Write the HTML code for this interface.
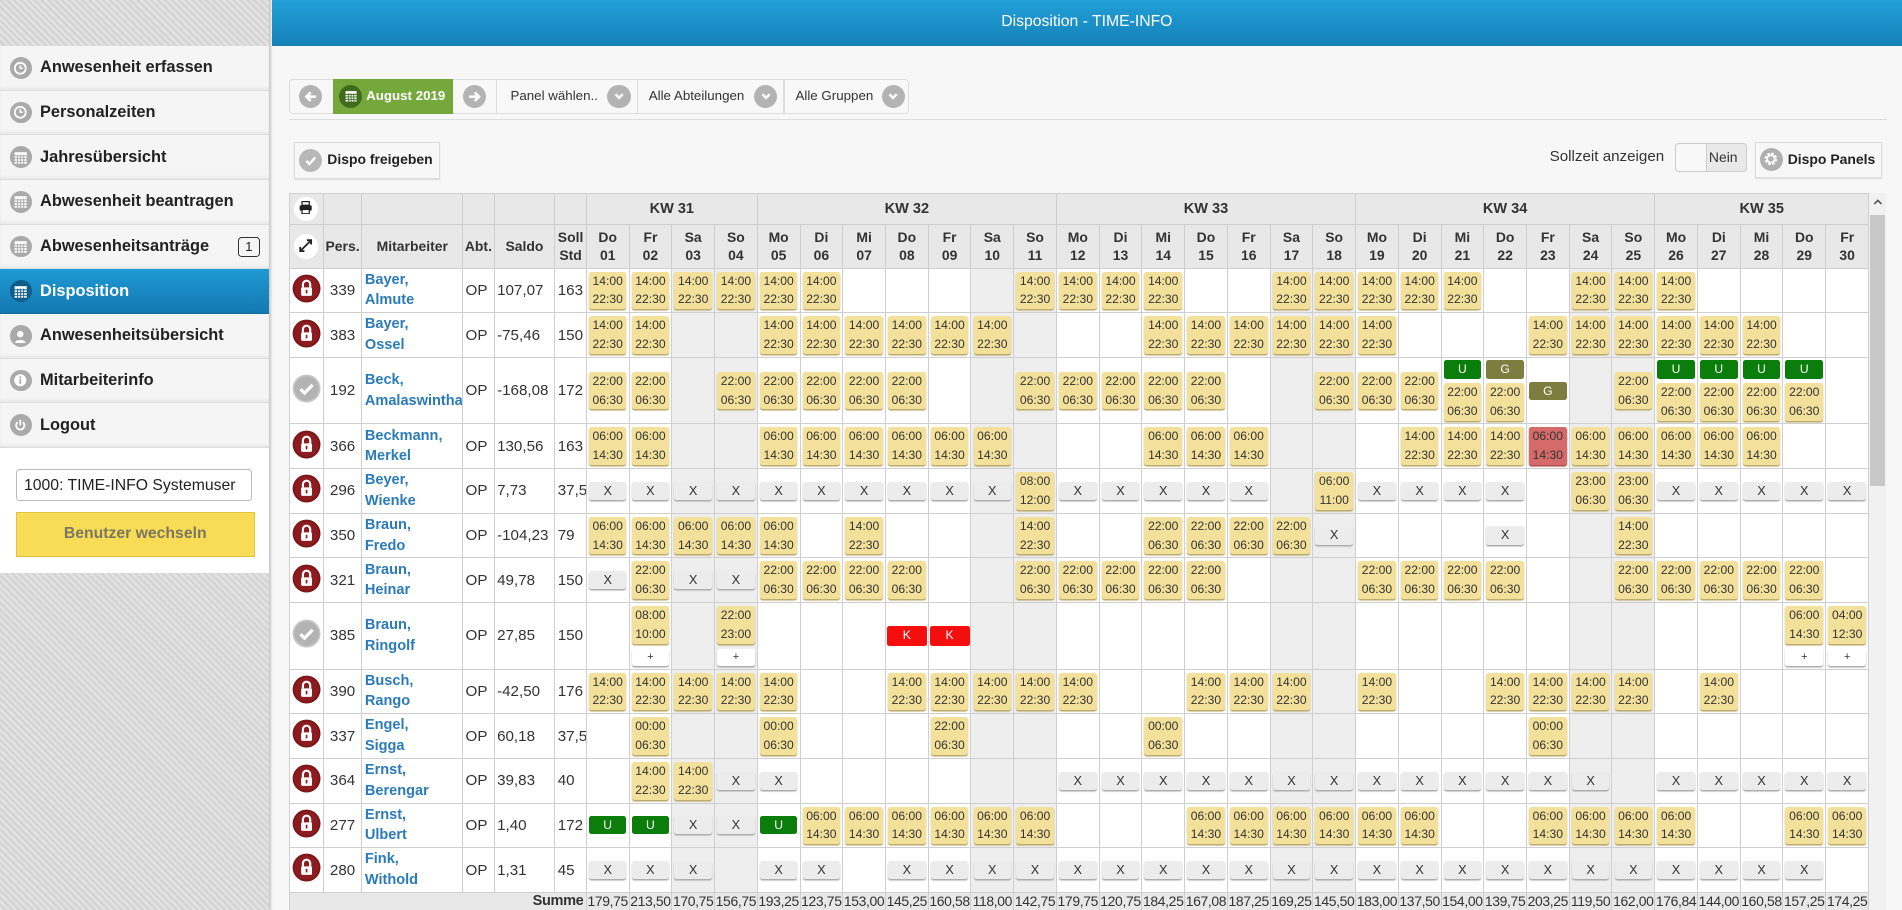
<!DOCTYPE html>
<html><head><meta charset="utf-8">
<style>
html,body{margin:0;padding:0;overflow:hidden;width:1902px;height:910px;background:#f7f7f7}
#z{zoom:1.213;width:1568px;height:751px;position:relative;overflow:hidden;font-family:"Liberation Sans",sans-serif;color:#333;background:#f7f7f7}
.hatch{background:repeating-linear-gradient(45deg,#e2e2e2 0 2px,#d4d4d4 2px 4px)}
#side{position:absolute;left:0;top:0;width:222px;height:751px;border-right:1px solid #ccc;box-shadow:1px 0 2px #bbb}
#side .top{height:38px}
.mi{height:36px;border-bottom:1px solid #dcdcdc;background:#f5f5f5;display:flex;align-items:center;font-weight:bold;font-size:13.5px;color:#222;position:relative;box-shadow:inset 0 -2px 2px #eaeaea}
.mi .ic{width:18px;height:18px;border-radius:50%;background:#aaa;margin:0 7px 0 8px;display:flex;align-items:center;justify-content:center}
.mi.act{background:linear-gradient(#1f9ad4,#1478b0);color:#fff;box-shadow:none;border-bottom:1px solid #136d9e}
.mi.act .ic{background:#0e5d8a}
.badge{position:absolute;right:8px;top:10px;width:16px;height:15px;border:1px solid #333;border-radius:3px;font-weight:normal;font-size:11px;text-align:center;line-height:15px}
.ubox{background:#fff;height:103px;position:relative}
.inp{position:absolute;left:13px;top:17px;width:195px;height:27px;border:1px solid #bbb;border-radius:3px;font-size:13px;line-height:27px;padding-left:6px;box-sizing:border-box;color:#222}
.btn{position:absolute;left:13px;top:53px;width:197px;height:37px;background:#f8dc55;border:1px solid #e0c340;box-sizing:border-box;text-align:center;line-height:35px;font-weight:bold;font-size:13px;color:#7a7762}
#hdr{position:absolute;left:224px;top:0;width:1344px;height:38px;background:linear-gradient(#22a0d8,#1580b8);color:#fff;text-align:center;line-height:37px;font-size:13px}
#tb{position:absolute;left:238px;top:65px;width:510px;height:27px;border:1px solid #ddd;border-radius:3px;background:#f8f8f8}
.hl{position:absolute;left:238px;top:98px;width:1318px;height:1px;background:#ddd}
.circ{position:absolute;width:19px;height:19px;border-radius:50%;background:#b3b3b3;display:flex;align-items:center;justify-content:center}
.tt{position:absolute;top:0;line-height:27px;font-size:11px;color:#333}
.sep{position:absolute;top:0;width:1px;height:27px;background:#ddd}
.bx{position:absolute;border:1px solid #ddd;background:#f7f7f7;box-shadow:0 1px 1px #ddd;font-weight:bold;font-size:11.5px;color:#222}
#tw{position:absolute;left:238px;top:159px;width:1303px;height:592px;overflow:hidden}
table{border-collapse:collapse;table-layout:fixed;width:1303px}
td,th{border:1px solid #cfcfcf;padding:0;text-align:center;vertical-align:middle;overflow:hidden;white-space:nowrap}
th{background:#e8e8e8;font-size:11.5px;color:#333;line-height:15px}
thead tr.r1 th{height:25px;font-size:12px}
thead tr.r2 th{height:35px}
tbody td{height:36px;background:#fff;font-size:12.5px}
tbody tr.tl td{height:54px}
tbody td.w{background:#eee}
td.n{text-align:left;padding-left:2px;font-weight:bold;color:#2b7bb9;font-size:12px;line-height:17px}
td.l{text-align:left;padding-left:2px}
b{display:block;margin:0 auto;width:31px;font-weight:normal;font-size:10px;text-align:center;border-radius:2px;color:#333}
b.t{background:#f3e19b;line-height:15.5px;box-shadow:0 1px 1px #b9a765}
b.x{background:#ececec;line-height:15px;box-shadow:0 1px 1px #aaa;font-size:10.5px}
b.u{background:#0a7d0a;color:#fff;line-height:15px;margin-bottom:4px}
b.g{background:#7d7d3f;color:#fff;line-height:15px}
b.g2{margin-bottom:4px}
b.k{background:#f50e0e;color:#fff;line-height:16px;width:33px}
b.r{background:#d46a6a;color:#333;line-height:15.5px;box-shadow:0 1px 1px #a44}
b.p{background:#fff;line-height:14px;box-shadow:0 1px 1px #aaa;margin-top:4px;font-size:9px}
tr.sum td{background:#e8e8e8;font-size:11.5px;height:14px;line-height:14px;letter-spacing:-.3px;vertical-align:top}
#sb{position:absolute;left:1541px;top:159px;width:14px;height:592px;background:#f1f1f1}
#sb .th{position:absolute;left:1px;top:18px;width:12px;height:224px;background:#c8c8c8}
</style></head><body><div id="z">
<div id="side">
 <div class="top hatch"></div>
 <div class="mi"><span class="ic"><svg width="12" height="12" viewBox="0 0 12 12"><circle cx="6" cy="6" r="4.5" fill="none" stroke="#fff" stroke-width="1.5"/><path d="M6 3.5V6h2" stroke="#fff" stroke-width="1.3" fill="none"/></svg></span>Anwesenheit erfassen</div>
 <div class="mi"><span class="ic"><svg width="12" height="12" viewBox="0 0 12 12"><circle cx="6" cy="6" r="4.5" fill="none" stroke="#fff" stroke-width="1.5"/><path d="M6 3.5V6h2" stroke="#fff" stroke-width="1.3" fill="none"/></svg></span>Personalzeiten</div>
 <div class="mi"><span class="ic"><svg width="11" height="11" viewBox="0 0 11 11"><rect x="0.5" y="1" width="10" height="9.5" fill="#fff"/><path d="M0 4h11M0 6.3h11M0 8.5h11M3 3v8M5.5 3v8M8 3v8" stroke="#aaa" stroke-width=".8"/></svg></span>Jahresübersicht</div>
 <div class="mi"><span class="ic"><svg width="11" height="11" viewBox="0 0 11 11"><rect x="0.5" y="1" width="10" height="9.5" fill="#fff"/><path d="M0 4h11M0 6.3h11M0 8.5h11M3 3v8M5.5 3v8M8 3v8" stroke="#aaa" stroke-width=".8"/></svg></span>Abwesenheit beantragen</div>
 <div class="mi"><span class="ic"><svg width="11" height="11" viewBox="0 0 11 11"><rect x="0.5" y="1" width="10" height="9.5" fill="#fff"/><path d="M0 4h11M0 6.3h11M0 8.5h11M3 3v8M5.5 3v8M8 3v8" stroke="#aaa" stroke-width=".8"/></svg></span>Abwesenheitsanträge<span class="badge">1</span></div>
 <div class="mi act"><span class="ic"><svg width="11" height="11" viewBox="0 0 11 11"><rect x="0.5" y="1" width="10" height="9.5" fill="#fff"/><path d="M0 4h11M0 6.3h11M0 8.5h11M3 3v8M5.5 3v8M8 3v8" stroke="#0e5d8a" stroke-width=".8"/></svg></span>Disposition</div>
 <div class="mi"><span class="ic"><svg width="12" height="12" viewBox="0 0 12 12"><circle cx="6" cy="4.2" r="2.6" fill="#fff"/><path d="M1.5 12c0-4 9-4 9 0z" fill="#fff"/></svg></span>Anwesenheitsübersicht</div>
 <div class="mi"><span class="ic"><svg width="12" height="12" viewBox="0 0 12 12"><circle cx="6" cy="6" r="5" fill="#fff"/><rect x="5.3" y="5" width="1.4" height="4" fill="#aaa"/><circle cx="6" cy="3.4" r=".8" fill="#aaa"/></svg></span>Mitarbeiterinfo</div>
 <div class="mi"><span class="ic"><svg width="12" height="12" viewBox="0 0 12 12"><path d="M3.8 3.5a3.4 3.4 0 1 0 4.4 0" fill="none" stroke="#fff" stroke-width="1.5"/><path d="M6 1.5v4.5" stroke="#fff" stroke-width="1.5"/></svg></span>Logout</div>
 <div class="ubox"><div class="inp">1000: TIME-INFO Systemuser</div><div class="btn">Benutzer wechseln</div></div>
 <div class="hatch" style="height:300px"></div>
</div>
<div id="hdr">Disposition - TIME-INFO</div>

<div id="tb">
 <div class="circ" style="left:8px;top:4px"><svg width="11" height="11" viewBox="0 0 11 11"><path d="M10 5.5H3M5.5 2L2 5.5 5.5 9" stroke="#fff" stroke-width="2.2" fill="none"/></svg></div>
 <div style="position:absolute;left:36px;top:-1px;width:99px;height:29px;background:#75a83b"></div>
 <div class="circ" style="left:41px;top:4px;background:#3f6b1d"><svg width="10" height="10" viewBox="0 0 11 11"><rect x="0.5" y="1" width="10" height="9.5" fill="#fff"/><path d="M0 4h11M0 6.3h11M0 8.5h11M3 3v8M5.5 3v8M8 3v8" stroke="#3f6b1d" stroke-width=".8"/></svg></div>
 <div class="tt" style="left:63px;color:#fff;font-weight:bold;font-size:11px">August 2019</div>
 <div class="circ" style="left:143px;top:4px"><svg width="11" height="11" viewBox="0 0 11 11"><path d="M1 5.5h7M5.5 2L9 5.5 5.5 9" stroke="#fff" stroke-width="2.2" fill="none"/></svg></div>
 <div class="sep" style="left:170px"></div>
 <div class="tt" style="left:182px">Panel wählen..</div>
 <div class="circ" style="left:262px;top:4px"><svg width="10" height="10" viewBox="0 0 10 10"><path d="M2 3.5l3 3 3-3" stroke="#fff" stroke-width="2" fill="none"/></svg></div>
 <div class="sep" style="left:286px"></div>
 <div class="tt" style="left:296px">Alle Abteilungen</div>
 <div class="circ" style="left:383px;top:4px"><svg width="10" height="10" viewBox="0 0 10 10"><path d="M2 3.5l3 3 3-3" stroke="#fff" stroke-width="2" fill="none"/></svg></div>
 <div class="sep" style="left:407px"></div>
 <div class="tt" style="left:417px">Alle Gruppen</div>
 <div class="circ" style="left:488px;top:4px"><svg width="10" height="10" viewBox="0 0 10 10"><path d="M2 3.5l3 3 3-3" stroke="#fff" stroke-width="2" fill="none"/></svg></div>
</div>
<div class="hl"></div>

<div class="bx" style="left:242px;top:117px;width:119px;height:29px">
 <div class="circ" style="left:4px;top:5px;background:#b8b8b8"><svg width="11" height="11" viewBox="0 0 11 11"><path d="M2 5.8l2.4 2.4L9.3 2.8" stroke="#fff" stroke-width="2" fill="none"/></svg></div>
 <span style="position:absolute;left:27px;top:7px">Dispo freigeben</span></div>
<div style="position:absolute;left:1200px;width:172px;text-align:right;top:122px;font-size:12.5px;color:#333">Sollzeit anzeigen</div>
<div style="position:absolute;left:1381px;top:118px;width:59px;height:24px;border:1px solid #ccc;border-radius:3px;background:#e9e9e9;box-sizing:border-box">
 <div style="position:absolute;left:0;top:0;width:25px;height:22px;background:#f8f8f8;border-right:1px solid #ccc;border-radius:3px 0 0 3px"></div>
 <span style="position:absolute;left:27px;top:4px;font-size:11.5px">Nein</span></div>
<div class="bx" style="left:1447px;top:117px;width:103px;height:28px">
 <div class="circ" style="left:3px;top:4px;background:#b0b0b0"><svg width="13" height="13" viewBox="0 0 14 14"><circle cx="7" cy="7" r="4.3" fill="none" stroke="#fff" stroke-width="2.6" stroke-dasharray="2.2 1.2"/><circle cx="7" cy="7" r="3.2" fill="none" stroke="#fff" stroke-width="1.4"/></svg></div>
 <span style="position:absolute;left:26px;top:7px">Dispo Panels</span></div>

<div id="tw"><table>
<colgroup><col style="width:28px"><col style="width:32px"><col style="width:83px"><col style="width:26px"><col style="width:50px"><col style="width:26px"></colgroup>
<thead>
<tr class="r1"><th><span style="display:inline-block;width:20px;height:20px;border-radius:50%;background:#fff;vertical-align:middle;line-height:22px"><svg width="11" height="11" viewBox="0 0 11 11"><rect x="2.5" y="0.5" width="6" height="3" fill="none" stroke="#222"/><rect x="0.5" y="3.5" width="10" height="4.5" rx="1" fill="#222"/><rect x="2.5" y="7" width="6" height="3.5" fill="#fff" stroke="#222"/></svg></span></th><th></th><th></th><th></th><th></th><th></th>
<th colspan="4">KW 31</th><th colspan="7">KW 32</th><th colspan="7">KW 33</th><th colspan="7">KW 34</th><th colspan="5">KW 35</th></tr>
<tr class="r2"><th><span style="display:inline-block;width:20px;height:20px;border-radius:50%;background:#fff;vertical-align:middle;line-height:22px"><svg width="11" height="11" viewBox="0 0 11 11"><path d="M1 10L10 1M6.5 1H10V4.5M1 6.5V10h3.5" stroke="#222" stroke-width="1.5" fill="none"/></svg></span></th><th>Pers.</th><th>Mitarbeiter</th><th>Abt.</th><th>Saldo</th><th>Soll<br>Std</th>
<th>Do<br>01</th><th>Fr<br>02</th><th>Sa<br>03</th><th>So<br>04</th><th>Mo<br>05</th><th>Di<br>06</th><th>Mi<br>07</th><th>Do<br>08</th><th>Fr<br>09</th><th>Sa<br>10</th><th>So<br>11</th><th>Mo<br>12</th><th>Di<br>13</th><th>Mi<br>14</th><th>Do<br>15</th><th>Fr<br>16</th><th>Sa<br>17</th><th>So<br>18</th><th>Mo<br>19</th><th>Di<br>20</th><th>Mi<br>21</th><th>Do<br>22</th><th>Fr<br>23</th><th>Sa<br>24</th><th>So<br>25</th><th>Mo<br>26</th><th>Di<br>27</th><th>Mi<br>28</th><th>Do<br>29</th><th>Fr<br>30</th></tr>
</thead>
<tbody>
<tr><td><svg width="24" height="24" viewBox="0 0 24 24"><circle cx="12" cy="12" r="11.5" fill="#7a1518"/><circle cx="12" cy="12" r="10" fill="#8c1c1f"/><path d="M9 11V8.5a3 3 0 0 1 6 0V11" fill="none" stroke="#fff" stroke-width="1.8"/><rect x="7.5" y="11" width="9" height="7" rx="1" fill="#fff"/><rect x="11.3" y="13" width="1.4" height="3" fill="#8c1c1f"/></svg></td><td>339</td><td class="n">Bayer,<br>Almute</td><td class="l">OP</td><td class="l">107,07</td><td class="l">163</td>
<td><b class="t">14:00<br>22:30</b></td><td><b class="t">14:00<br>22:30</b></td><td class="w"><b class="t">14:00<br>22:30</b></td><td class="w"><b class="t">14:00<br>22:30</b></td><td><b class="t">14:00<br>22:30</b></td><td><b class="t">14:00<br>22:30</b></td><td></td><td></td><td></td><td class="w"></td><td class="w"><b class="t">14:00<br>22:30</b></td><td><b class="t">14:00<br>22:30</b></td><td><b class="t">14:00<br>22:30</b></td><td><b class="t">14:00<br>22:30</b></td><td></td><td></td><td class="w"><b class="t">14:00<br>22:30</b></td><td class="w"><b class="t">14:00<br>22:30</b></td><td><b class="t">14:00<br>22:30</b></td><td><b class="t">14:00<br>22:30</b></td><td><b class="t">14:00<br>22:30</b></td><td></td><td></td><td class="w"><b class="t">14:00<br>22:30</b></td><td class="w"><b class="t">14:00<br>22:30</b></td><td><b class="t">14:00<br>22:30</b></td><td></td><td></td><td></td><td></td></tr>
<tr><td><svg width="24" height="24" viewBox="0 0 24 24"><circle cx="12" cy="12" r="11.5" fill="#7a1518"/><circle cx="12" cy="12" r="10" fill="#8c1c1f"/><path d="M9 11V8.5a3 3 0 0 1 6 0V11" fill="none" stroke="#fff" stroke-width="1.8"/><rect x="7.5" y="11" width="9" height="7" rx="1" fill="#fff"/><rect x="11.3" y="13" width="1.4" height="3" fill="#8c1c1f"/></svg></td><td>383</td><td class="n">Bayer,<br>Ossel</td><td class="l">OP</td><td class="l">-75,46</td><td class="l">150</td>
<td><b class="t">14:00<br>22:30</b></td><td><b class="t">14:00<br>22:30</b></td><td class="w"></td><td class="w"></td><td><b class="t">14:00<br>22:30</b></td><td><b class="t">14:00<br>22:30</b></td><td><b class="t">14:00<br>22:30</b></td><td><b class="t">14:00<br>22:30</b></td><td><b class="t">14:00<br>22:30</b></td><td class="w"><b class="t">14:00<br>22:30</b></td><td class="w"></td><td></td><td></td><td><b class="t">14:00<br>22:30</b></td><td><b class="t">14:00<br>22:30</b></td><td><b class="t">14:00<br>22:30</b></td><td class="w"><b class="t">14:00<br>22:30</b></td><td class="w"><b class="t">14:00<br>22:30</b></td><td><b class="t">14:00<br>22:30</b></td><td></td><td></td><td></td><td><b class="t">14:00<br>22:30</b></td><td class="w"><b class="t">14:00<br>22:30</b></td><td class="w"><b class="t">14:00<br>22:30</b></td><td><b class="t">14:00<br>22:30</b></td><td><b class="t">14:00<br>22:30</b></td><td><b class="t">14:00<br>22:30</b></td><td></td><td></td></tr>
<tr class="tl"><td><svg width="24" height="24" viewBox="0 0 24 24"><circle cx="12" cy="12" r="11.5" fill="#c4c4c4"/><circle cx="12" cy="12" r="10" fill="#b3b3b3"/><path d="M7 12.5l3.3 3.3L17 9" stroke="#fff" stroke-width="2.6" fill="none"/></svg></td><td>192</td><td class="n">Beck,<br>Amalaswintha</td><td class="l">OP</td><td class="l">-168,08</td><td class="l">172</td>
<td><b class="t">22:00<br>06:30</b></td><td><b class="t">22:00<br>06:30</b></td><td class="w"></td><td class="w"><b class="t">22:00<br>06:30</b></td><td><b class="t">22:00<br>06:30</b></td><td><b class="t">22:00<br>06:30</b></td><td><b class="t">22:00<br>06:30</b></td><td><b class="t">22:00<br>06:30</b></td><td></td><td class="w"></td><td class="w"><b class="t">22:00<br>06:30</b></td><td><b class="t">22:00<br>06:30</b></td><td><b class="t">22:00<br>06:30</b></td><td><b class="t">22:00<br>06:30</b></td><td><b class="t">22:00<br>06:30</b></td><td></td><td class="w"></td><td class="w"><b class="t">22:00<br>06:30</b></td><td><b class="t">22:00<br>06:30</b></td><td><b class="t">22:00<br>06:30</b></td><td><b class="u">U</b><b class="t">22:00<br>06:30</b></td><td><b class="g g2">G</b><b class="t">22:00<br>06:30</b></td><td><b class="g">G</b></td><td class="w"></td><td class="w"><b class="t">22:00<br>06:30</b></td><td><b class="u">U</b><b class="t">22:00<br>06:30</b></td><td><b class="u">U</b><b class="t">22:00<br>06:30</b></td><td><b class="u">U</b><b class="t">22:00<br>06:30</b></td><td><b class="u">U</b><b class="t">22:00<br>06:30</b></td><td></td></tr>
<tr><td><svg width="24" height="24" viewBox="0 0 24 24"><circle cx="12" cy="12" r="11.5" fill="#7a1518"/><circle cx="12" cy="12" r="10" fill="#8c1c1f"/><path d="M9 11V8.5a3 3 0 0 1 6 0V11" fill="none" stroke="#fff" stroke-width="1.8"/><rect x="7.5" y="11" width="9" height="7" rx="1" fill="#fff"/><rect x="11.3" y="13" width="1.4" height="3" fill="#8c1c1f"/></svg></td><td>366</td><td class="n">Beckmann,<br>Merkel</td><td class="l">OP</td><td class="l">130,56</td><td class="l">163</td>
<td><b class="t">06:00<br>14:30</b></td><td><b class="t">06:00<br>14:30</b></td><td class="w"></td><td class="w"></td><td><b class="t">06:00<br>14:30</b></td><td><b class="t">06:00<br>14:30</b></td><td><b class="t">06:00<br>14:30</b></td><td><b class="t">06:00<br>14:30</b></td><td><b class="t">06:00<br>14:30</b></td><td class="w"><b class="t">06:00<br>14:30</b></td><td class="w"></td><td></td><td></td><td><b class="t">06:00<br>14:30</b></td><td><b class="t">06:00<br>14:30</b></td><td><b class="t">06:00<br>14:30</b></td><td class="w"></td><td class="w"></td><td></td><td><b class="t">14:00<br>22:30</b></td><td><b class="t">14:00<br>22:30</b></td><td><b class="t">14:00<br>22:30</b></td><td><b class="r">06:00<br>14:30</b></td><td class="w"><b class="t">06:00<br>14:30</b></td><td class="w"><b class="t">06:00<br>14:30</b></td><td><b class="t">06:00<br>14:30</b></td><td><b class="t">06:00<br>14:30</b></td><td><b class="t">06:00<br>14:30</b></td><td></td><td></td></tr>
<tr><td><svg width="24" height="24" viewBox="0 0 24 24"><circle cx="12" cy="12" r="11.5" fill="#7a1518"/><circle cx="12" cy="12" r="10" fill="#8c1c1f"/><path d="M9 11V8.5a3 3 0 0 1 6 0V11" fill="none" stroke="#fff" stroke-width="1.8"/><rect x="7.5" y="11" width="9" height="7" rx="1" fill="#fff"/><rect x="11.3" y="13" width="1.4" height="3" fill="#8c1c1f"/></svg></td><td>296</td><td class="n">Beyer,<br>Wienke</td><td class="l">OP</td><td class="l">7,73</td><td class="l">37,5</td>
<td><b class="x">X</b></td><td><b class="x">X</b></td><td class="w"><b class="x">X</b></td><td class="w"><b class="x">X</b></td><td><b class="x">X</b></td><td><b class="x">X</b></td><td><b class="x">X</b></td><td><b class="x">X</b></td><td><b class="x">X</b></td><td class="w"><b class="x">X</b></td><td class="w"><b class="t">08:00<br>12:00</b></td><td><b class="x">X</b></td><td><b class="x">X</b></td><td><b class="x">X</b></td><td><b class="x">X</b></td><td><b class="x">X</b></td><td class="w"></td><td class="w"><b class="t">06:00<br>11:00</b></td><td><b class="x">X</b></td><td><b class="x">X</b></td><td><b class="x">X</b></td><td><b class="x">X</b></td><td></td><td class="w"><b class="t">23:00<br>06:30</b></td><td class="w"><b class="t">23:00<br>06:30</b></td><td><b class="x">X</b></td><td><b class="x">X</b></td><td><b class="x">X</b></td><td><b class="x">X</b></td><td><b class="x">X</b></td></tr>
<tr><td><svg width="24" height="24" viewBox="0 0 24 24"><circle cx="12" cy="12" r="11.5" fill="#7a1518"/><circle cx="12" cy="12" r="10" fill="#8c1c1f"/><path d="M9 11V8.5a3 3 0 0 1 6 0V11" fill="none" stroke="#fff" stroke-width="1.8"/><rect x="7.5" y="11" width="9" height="7" rx="1" fill="#fff"/><rect x="11.3" y="13" width="1.4" height="3" fill="#8c1c1f"/></svg></td><td>350</td><td class="n">Braun,<br>Fredo</td><td class="l">OP</td><td class="l">-104,23</td><td class="l">79</td>
<td><b class="t">06:00<br>14:30</b></td><td><b class="t">06:00<br>14:30</b></td><td class="w"><b class="t">06:00<br>14:30</b></td><td class="w"><b class="t">06:00<br>14:30</b></td><td><b class="t">06:00<br>14:30</b></td><td></td><td><b class="t">14:00<br>22:30</b></td><td></td><td></td><td class="w"></td><td class="w"><b class="t">14:00<br>22:30</b></td><td></td><td></td><td><b class="t">22:00<br>06:30</b></td><td><b class="t">22:00<br>06:30</b></td><td><b class="t">22:00<br>06:30</b></td><td class="w"><b class="t">22:00<br>06:30</b></td><td class="w"><b class="x">X</b></td><td></td><td></td><td></td><td><b class="x">X</b></td><td></td><td class="w"></td><td class="w"><b class="t">14:00<br>22:30</b></td><td></td><td></td><td></td><td></td><td></td></tr>
<tr><td><svg width="24" height="24" viewBox="0 0 24 24"><circle cx="12" cy="12" r="11.5" fill="#7a1518"/><circle cx="12" cy="12" r="10" fill="#8c1c1f"/><path d="M9 11V8.5a3 3 0 0 1 6 0V11" fill="none" stroke="#fff" stroke-width="1.8"/><rect x="7.5" y="11" width="9" height="7" rx="1" fill="#fff"/><rect x="11.3" y="13" width="1.4" height="3" fill="#8c1c1f"/></svg></td><td>321</td><td class="n">Braun,<br>Heinar</td><td class="l">OP</td><td class="l">49,78</td><td class="l">150</td>
<td><b class="x">X</b></td><td><b class="t">22:00<br>06:30</b></td><td class="w"><b class="x">X</b></td><td class="w"><b class="x">X</b></td><td><b class="t">22:00<br>06:30</b></td><td><b class="t">22:00<br>06:30</b></td><td><b class="t">22:00<br>06:30</b></td><td><b class="t">22:00<br>06:30</b></td><td></td><td class="w"></td><td class="w"><b class="t">22:00<br>06:30</b></td><td><b class="t">22:00<br>06:30</b></td><td><b class="t">22:00<br>06:30</b></td><td><b class="t">22:00<br>06:30</b></td><td><b class="t">22:00<br>06:30</b></td><td></td><td class="w"></td><td class="w"></td><td><b class="t">22:00<br>06:30</b></td><td><b class="t">22:00<br>06:30</b></td><td><b class="t">22:00<br>06:30</b></td><td><b class="t">22:00<br>06:30</b></td><td></td><td class="w"></td><td class="w"><b class="t">22:00<br>06:30</b></td><td><b class="t">22:00<br>06:30</b></td><td><b class="t">22:00<br>06:30</b></td><td><b class="t">22:00<br>06:30</b></td><td><b class="t">22:00<br>06:30</b></td><td></td></tr>
<tr class="tl"><td><svg width="24" height="24" viewBox="0 0 24 24"><circle cx="12" cy="12" r="11.5" fill="#c4c4c4"/><circle cx="12" cy="12" r="10" fill="#b3b3b3"/><path d="M7 12.5l3.3 3.3L17 9" stroke="#fff" stroke-width="2.6" fill="none"/></svg></td><td>385</td><td class="n">Braun,<br>Ringolf</td><td class="l">OP</td><td class="l">27,85</td><td class="l">150</td>
<td></td><td><b class="t">08:00<br>10:00</b><b class="p">+</b></td><td class="w"></td><td class="w"><b class="t">22:00<br>23:00</b><b class="p">+</b></td><td></td><td></td><td></td><td><b class="k">K</b></td><td><b class="k">K</b></td><td class="w"></td><td class="w"></td><td></td><td></td><td></td><td></td><td></td><td class="w"></td><td class="w"></td><td></td><td></td><td></td><td></td><td></td><td class="w"></td><td class="w"></td><td></td><td></td><td></td><td><b class="t">06:00<br>14:30</b><b class="p">+</b></td><td><b class="t">04:00<br>12:30</b><b class="p">+</b></td></tr>
<tr><td><svg width="24" height="24" viewBox="0 0 24 24"><circle cx="12" cy="12" r="11.5" fill="#7a1518"/><circle cx="12" cy="12" r="10" fill="#8c1c1f"/><path d="M9 11V8.5a3 3 0 0 1 6 0V11" fill="none" stroke="#fff" stroke-width="1.8"/><rect x="7.5" y="11" width="9" height="7" rx="1" fill="#fff"/><rect x="11.3" y="13" width="1.4" height="3" fill="#8c1c1f"/></svg></td><td>390</td><td class="n">Busch,<br>Rango</td><td class="l">OP</td><td class="l">-42,50</td><td class="l">176</td>
<td><b class="t">14:00<br>22:30</b></td><td><b class="t">14:00<br>22:30</b></td><td class="w"><b class="t">14:00<br>22:30</b></td><td class="w"><b class="t">14:00<br>22:30</b></td><td><b class="t">14:00<br>22:30</b></td><td></td><td></td><td><b class="t">14:00<br>22:30</b></td><td><b class="t">14:00<br>22:30</b></td><td class="w"><b class="t">14:00<br>22:30</b></td><td class="w"><b class="t">14:00<br>22:30</b></td><td><b class="t">14:00<br>22:30</b></td><td></td><td></td><td><b class="t">14:00<br>22:30</b></td><td><b class="t">14:00<br>22:30</b></td><td class="w"><b class="t">14:00<br>22:30</b></td><td class="w"></td><td><b class="t">14:00<br>22:30</b></td><td></td><td></td><td><b class="t">14:00<br>22:30</b></td><td><b class="t">14:00<br>22:30</b></td><td class="w"><b class="t">14:00<br>22:30</b></td><td class="w"><b class="t">14:00<br>22:30</b></td><td></td><td><b class="t">14:00<br>22:30</b></td><td></td><td></td><td></td></tr>
<tr><td><svg width="24" height="24" viewBox="0 0 24 24"><circle cx="12" cy="12" r="11.5" fill="#7a1518"/><circle cx="12" cy="12" r="10" fill="#8c1c1f"/><path d="M9 11V8.5a3 3 0 0 1 6 0V11" fill="none" stroke="#fff" stroke-width="1.8"/><rect x="7.5" y="11" width="9" height="7" rx="1" fill="#fff"/><rect x="11.3" y="13" width="1.4" height="3" fill="#8c1c1f"/></svg></td><td>337</td><td class="n">Engel,<br>Sigga</td><td class="l">OP</td><td class="l">60,18</td><td class="l">37,5</td>
<td></td><td><b class="t">00:00<br>06:30</b></td><td class="w"></td><td class="w"></td><td><b class="t">00:00<br>06:30</b></td><td></td><td></td><td></td><td><b class="t">22:00<br>06:30</b></td><td class="w"></td><td class="w"></td><td></td><td></td><td><b class="t">00:00<br>06:30</b></td><td></td><td></td><td class="w"></td><td class="w"></td><td></td><td></td><td></td><td></td><td><b class="t">00:00<br>06:30</b></td><td class="w"></td><td class="w"></td><td></td><td></td><td></td><td></td><td></td></tr>
<tr><td><svg width="24" height="24" viewBox="0 0 24 24"><circle cx="12" cy="12" r="11.5" fill="#7a1518"/><circle cx="12" cy="12" r="10" fill="#8c1c1f"/><path d="M9 11V8.5a3 3 0 0 1 6 0V11" fill="none" stroke="#fff" stroke-width="1.8"/><rect x="7.5" y="11" width="9" height="7" rx="1" fill="#fff"/><rect x="11.3" y="13" width="1.4" height="3" fill="#8c1c1f"/></svg></td><td>364</td><td class="n">Ernst,<br>Berengar</td><td class="l">OP</td><td class="l">39,83</td><td class="l">40</td>
<td></td><td><b class="t">14:00<br>22:30</b></td><td class="w"><b class="t">14:00<br>22:30</b></td><td class="w"><b class="x">X</b></td><td><b class="x">X</b></td><td></td><td></td><td></td><td></td><td class="w"></td><td class="w"></td><td><b class="x">X</b></td><td><b class="x">X</b></td><td><b class="x">X</b></td><td><b class="x">X</b></td><td><b class="x">X</b></td><td class="w"><b class="x">X</b></td><td class="w"><b class="x">X</b></td><td><b class="x">X</b></td><td><b class="x">X</b></td><td><b class="x">X</b></td><td><b class="x">X</b></td><td><b class="x">X</b></td><td class="w"><b class="x">X</b></td><td class="w"></td><td><b class="x">X</b></td><td><b class="x">X</b></td><td><b class="x">X</b></td><td><b class="x">X</b></td><td><b class="x">X</b></td></tr>
<tr><td><svg width="24" height="24" viewBox="0 0 24 24"><circle cx="12" cy="12" r="11.5" fill="#7a1518"/><circle cx="12" cy="12" r="10" fill="#8c1c1f"/><path d="M9 11V8.5a3 3 0 0 1 6 0V11" fill="none" stroke="#fff" stroke-width="1.8"/><rect x="7.5" y="11" width="9" height="7" rx="1" fill="#fff"/><rect x="11.3" y="13" width="1.4" height="3" fill="#8c1c1f"/></svg></td><td>277</td><td class="n">Ernst,<br>Ulbert</td><td class="l">OP</td><td class="l">1,40</td><td class="l">172</td>
<td><b class="u" style="margin-bottom:0">U</b></td><td><b class="u" style="margin-bottom:0">U</b></td><td class="w"><b class="x">X</b></td><td class="w"><b class="x">X</b></td><td><b class="u" style="margin-bottom:0">U</b></td><td><b class="t">06:00<br>14:30</b></td><td><b class="t">06:00<br>14:30</b></td><td><b class="t">06:00<br>14:30</b></td><td><b class="t">06:00<br>14:30</b></td><td class="w"><b class="t">06:00<br>14:30</b></td><td class="w"><b class="t">06:00<br>14:30</b></td><td></td><td></td><td></td><td><b class="t">06:00<br>14:30</b></td><td><b class="t">06:00<br>14:30</b></td><td class="w"><b class="t">06:00<br>14:30</b></td><td class="w"><b class="t">06:00<br>14:30</b></td><td><b class="t">06:00<br>14:30</b></td><td><b class="t">06:00<br>14:30</b></td><td></td><td></td><td><b class="t">06:00<br>14:30</b></td><td class="w"><b class="t">06:00<br>14:30</b></td><td class="w"><b class="t">06:00<br>14:30</b></td><td><b class="t">06:00<br>14:30</b></td><td></td><td></td><td><b class="t">06:00<br>14:30</b></td><td><b class="t">06:00<br>14:30</b></td></tr>
<tr><td><svg width="24" height="24" viewBox="0 0 24 24"><circle cx="12" cy="12" r="11.5" fill="#7a1518"/><circle cx="12" cy="12" r="10" fill="#8c1c1f"/><path d="M9 11V8.5a3 3 0 0 1 6 0V11" fill="none" stroke="#fff" stroke-width="1.8"/><rect x="7.5" y="11" width="9" height="7" rx="1" fill="#fff"/><rect x="11.3" y="13" width="1.4" height="3" fill="#8c1c1f"/></svg></td><td>280</td><td class="n">Fink,<br>Withold</td><td class="l">OP</td><td class="l">1,31</td><td class="l">45</td>
<td><b class="x">X</b></td><td><b class="x">X</b></td><td class="w"><b class="x">X</b></td><td class="w"></td><td><b class="x">X</b></td><td><b class="x">X</b></td><td></td><td><b class="x">X</b></td><td><b class="x">X</b></td><td class="w"><b class="x">X</b></td><td class="w"><b class="x">X</b></td><td><b class="x">X</b></td><td><b class="x">X</b></td><td><b class="x">X</b></td><td><b class="x">X</b></td><td><b class="x">X</b></td><td class="w"><b class="x">X</b></td><td class="w"><b class="x">X</b></td><td><b class="x">X</b></td><td><b class="x">X</b></td><td><b class="x">X</b></td><td><b class="x">X</b></td><td><b class="x">X</b></td><td class="w"><b class="x">X</b></td><td class="w"><b class="x">X</b></td><td><b class="x">X</b></td><td><b class="x">X</b></td><td><b class="x">X</b></td><td><b class="x">X</b></td><td></td></tr>
<tr class="sum"><td colspan="6" style="text-align:right;padding-right:2px;font-weight:bold;font-size:12px">Summe</td><td>179,75</td><td>213,50</td><td>170,75</td><td>156,75</td><td>193,25</td><td>123,75</td><td>153,00</td><td>145,25</td><td>160,58</td><td>118,00</td><td>142,75</td><td>179,75</td><td>120,75</td><td>184,25</td><td>167,08</td><td>187,25</td><td>169,25</td><td>145,50</td><td>183,00</td><td>137,50</td><td>154,00</td><td>139,75</td><td>203,25</td><td>119,50</td><td>162,00</td><td>176,84</td><td>144,00</td><td>160,58</td><td>157,25</td><td>174,25</td></tr>
</tbody></table></div>
<div id="sb"><svg style="position:absolute;left:3px;top:4px" width="8" height="6" viewBox="0 0 8 6"><path d="M1 5l3-3 3 3" stroke="#555" stroke-width="1.3" fill="none"/></svg><div class="th"></div></div>
</div></body></html>
